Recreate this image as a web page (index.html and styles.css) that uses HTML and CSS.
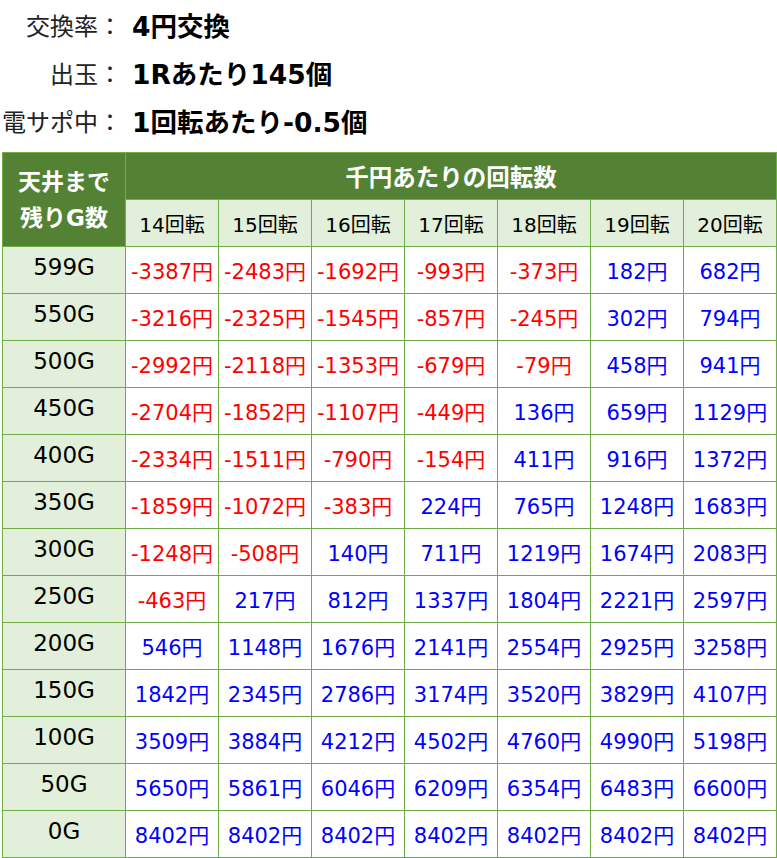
FILE: index.html
```html
<!DOCTYPE html>
<html lang="ja">
<head>
<meta charset="utf-8">
<link rel="stylesheet" href="styles.css">
</head>
<body>
<div class="spec">
  <div class="spec-row"><span class="spec-label">交換率：</span><span class="spec-value">4円交換</span></div>
  <div class="spec-row"><span class="spec-label">出玉：</span><span class="spec-value">1Rあたり145個</span></div>
  <div class="spec-row"><span class="spec-label">電サポ中：</span><span class="spec-value">1回転あたり-0.5個</span></div>
</div>
<table class="grid">
  <thead>
    <tr>
      <th class="corner" rowspan="2">天井まで<br>残りG数</th>
      <th class="title" colspan="7">千円あたりの回転数</th>
    </tr>
    <tr class="sub">
      <th>14回転</th><th>15回転</th><th>16回転</th><th>17回転</th><th>18回転</th><th>19回転</th><th>20回転</th>
    </tr>
  </thead>
  <tbody>
    <tr><th>599G</th><td class="neg">-3387円</td><td class="neg">-2483円</td><td class="neg">-1692円</td><td class="neg">-993円</td><td class="neg">-373円</td><td>182円</td><td>682円</td></tr>
    <tr><th>550G</th><td class="neg">-3216円</td><td class="neg">-2325円</td><td class="neg">-1545円</td><td class="neg">-857円</td><td class="neg">-245円</td><td>302円</td><td>794円</td></tr>
    <tr><th>500G</th><td class="neg">-2992円</td><td class="neg">-2118円</td><td class="neg">-1353円</td><td class="neg">-679円</td><td class="neg">-79円</td><td>458円</td><td>941円</td></tr>
    <tr><th>450G</th><td class="neg">-2704円</td><td class="neg">-1852円</td><td class="neg">-1107円</td><td class="neg">-449円</td><td>136円</td><td>659円</td><td>1129円</td></tr>
    <tr><th>400G</th><td class="neg">-2334円</td><td class="neg">-1511円</td><td class="neg">-790円</td><td class="neg">-154円</td><td>411円</td><td>916円</td><td>1372円</td></tr>
    <tr><th>350G</th><td class="neg">-1859円</td><td class="neg">-1072円</td><td class="neg">-383円</td><td>224円</td><td>765円</td><td>1248円</td><td>1683円</td></tr>
    <tr><th>300G</th><td class="neg">-1248円</td><td class="neg">-508円</td><td>140円</td><td>711円</td><td>1219円</td><td>1674円</td><td>2083円</td></tr>
    <tr><th>250G</th><td class="neg">-463円</td><td>217円</td><td>812円</td><td>1337円</td><td>1804円</td><td>2221円</td><td>2597円</td></tr>
    <tr><th>200G</th><td>546円</td><td>1148円</td><td>1676円</td><td>2141円</td><td>2554円</td><td>2925円</td><td>3258円</td></tr>
    <tr><th>150G</th><td>1842円</td><td>2345円</td><td>2786円</td><td>3174円</td><td>3520円</td><td>3829円</td><td>4107円</td></tr>
    <tr><th>100G</th><td>3509円</td><td>3884円</td><td>4212円</td><td>4502円</td><td>4760円</td><td>4990円</td><td>5198円</td></tr>
    <tr><th>50G</th><td>5650円</td><td>5861円</td><td>6046円</td><td>6209円</td><td>6354円</td><td>6483円</td><td>6600円</td></tr>
    <tr><th>0G</th><td>8402円</td><td>8402円</td><td>8402円</td><td>8402円</td><td>8402円</td><td>8402円</td><td>8402円</td></tr>
  </tbody>
</table>
</body>
</html>
```
FILE: styles.css
```css
html, body {
  margin: 0;
  padding: 0;
  background: #fff;
}
body {
  font-family: "DejaVu Sans", "Noto Sans CJK JP", sans-serif;
  color: #000;
}
.spec {
  display: flex;
  flex-direction: column;
  padding-bottom: 8px;
}
.spec-row {
  display: flex;
  align-items: center;
  height: 48px;
}
.spec-label {
  width: 122px;
  text-align: right;
  color: #222;
  font-size: 24px;
}
.spec-value {
  padding-left: 10px;
  font-weight: bold;
  font-size: 26.5px;
}
.grid {
  border-collapse: collapse;
  margin-left: 2px;
  width: 775px;
  table-layout: fixed;
}
.grid th, .grid td {
  border: 1px solid #70ad47;
  height: 47px;
  padding: 0;
  text-align: center;
  font-size: 21px;
  font-weight: normal;
  box-sizing: border-box;
}
.grid .corner {
  width: 123px;
  background: #548235;
  color: #fff;
  font-weight: bold;
  font-size: 23px;
  line-height: 36px;
}
.grid .title {
  background: #548235;
  color: #fff;
  font-weight: bold;
  font-size: 23.5px;
}
.grid .sub th {
  background: #e2efda;
  font-size: 20px;
}
.grid tbody th {
  background: #e2efda;
  padding-bottom: 6px;
  font-size: 23px;
}
.grid td {
  color: #0000ff;
}
.grid td.neg {
  color: #ff0000;
}
```
